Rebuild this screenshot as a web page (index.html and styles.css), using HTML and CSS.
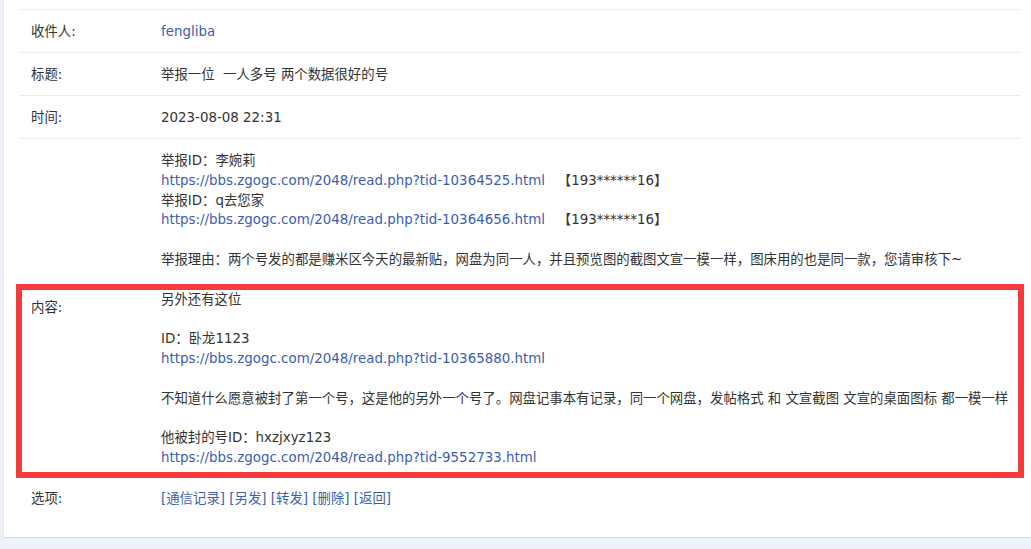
FILE: index.html
```html
<!DOCTYPE html>
<html lang="zh-CN">
<head>
    <meta charset="UTF-8">
    <title>短消息</title>
    <link rel="stylesheet" href="styles.css">
</head>
<body>
    <div class="panel">
        <table class="msg">
            <tr class="top-row"><td colspan="2"></td></tr>
            <tr>
                <th>收件人:</th>
                <td><a href="#">fengliba</a></td>
            </tr>
            <tr>
                <th>标题:</th>
                <td>举报一位&nbsp; 一人多号 两个数据很好的号</td>
            </tr>
            <tr>
                <th>时间:</th>
                <td>2023-08-08 22:31</td>
            </tr>
            <tr class="content-row">
                <th>内容:</th>
                <td>
                    举报ID：李婉莉<br>
                    <a href="#">https://bbs.zgogc.com/2048/read.php?tid-10364525.html</a>&nbsp;&nbsp;&nbsp;【193******16】<br>
                    举报ID：q去您家<br>
                    <a href="#">https://bbs.zgogc.com/2048/read.php?tid-10364656.html</a>&nbsp;&nbsp;&nbsp;【193******16】<br>
                    <br>
                    举报理由：两个号发的都是赚米区今天的最新贴，网盘为同一人，并且预览图的截图文宣一模一样，图床用的也是同一款，您请审核下~<br>
                    <br>
                    另外还有这位<br>
                    <br>
                    ID：卧龙1123<br>
                    <a href="#">https://bbs.zgogc.com/2048/read.php?tid-10365880.html</a><br>
                    <br>
                    不知道什么愿意被封了第一个号，这是他的另外一个号了。网盘记事本有记录，同一个网盘，发帖格式 和 文宣截图 文宣的桌面图标 都一模一样<br>
                    <br>
                    他被封的号ID：hxzjxyz123<br>
                    <a href="#">https://bbs.zgogc.com/2048/read.php?tid-9552733.html</a>
                </td>
            </tr>
            <tr class="last-row">
                <th>选项:</th>
                <td class="ops">
                    <a href="#">[通信记录]</a> <a href="#">[另发]</a> <a href="#">[转发]</a> <a href="#">[删除]</a> <a href="#">[返回]</a>
                </td>
            </tr>
        </table>
        <div class="mark"></div>
    </div>
</body>
</html>
```

FILE: styles.css
```css
body {
    margin: 0;
    background-color: #edf2fa;
    font-family: "DejaVu Sans", "Noto Sans CJK SC", sans-serif;
    font-size: 13.4px;
    color: #333;
}
.panel {
    position: relative;
    margin-left: 3px;
    height: 537px;
    background-color: #fff;
    border-left: 1px solid #e4e9f0;
    border-bottom: 1px solid #d3dbe5;
    padding: 0 10px 0 16px;
}
.msg {
    width: 1000px;
    border-collapse: collapse;
}
.msg th,
.msg td {
    border-bottom: 1px solid #ececec;
    height: 41px;
    padding: 1px 11px 0;
    text-align: left;
    font-weight: normal;
    line-height: 19.8px;
}
.msg th {
    width: 108px;
}
.msg .top-row td {
    height: 9px;
    padding: 0;
}
.content-row td {
    padding-top: 12px;
    padding-bottom: 9px;
}
.last-row th,
.last-row td {
    border-bottom: none;
}
a {
    color: #3a5cb4;
    text-decoration: none;
}
.ops a {
    color: #3d5fb0;
}
.mark {
    position: absolute;
    left: 12px;
    top: 284px;
    width: 996px;
    height: 182px;
    border: 6px solid #f53b3b;
}
```
